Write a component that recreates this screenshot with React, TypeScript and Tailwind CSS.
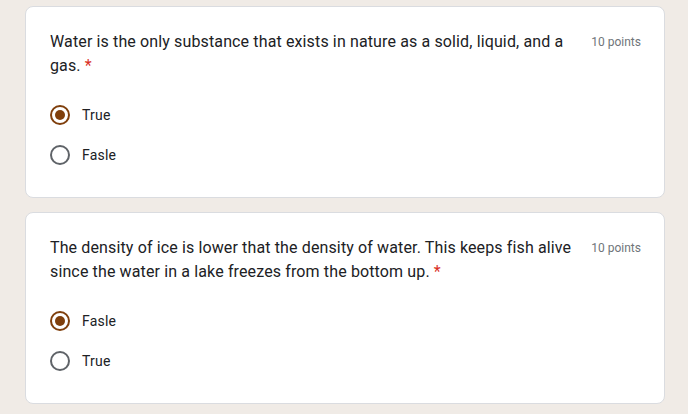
import React from "react";

type Q = { text: string; options: string[]; selected: number };

const questions: Q[] = [
  {
    text: "Water is the only substance that exists in nature as a solid, liquid, and a gas.",
    options: ["True", "Fasle"],
    selected: 0,
  },
  {
    text: "The density of ice is lower that the density of water. This keeps fish alive since the water in a lake freezes from the bottom up.",
    options: ["Fasle", "True"],
    selected: 0,
  },
];

function Radio({ checked }: { checked: boolean }) {
  return checked ? (
    <span className="flex h-5 w-5 items-center justify-center rounded-full border-2 border-[#7f3f0c]">
      <span className="h-2.5 w-2.5 rounded-full bg-[#7f3f0c]" />
    </span>
  ) : (
    <span className="h-5 w-5 rounded-full border-2 border-[#5f6368]" />
  );
}

export default function App() {
  return (
    <div className="min-h-[414px] bg-[#f0ebe6] pt-[6px] pl-[25px] font-['Roboto',sans-serif]">
      {questions.map((q, i) => (
        <div
          key={i}
          className="mb-[14px] h-[192px] w-[640px] rounded-lg border border-[#dadce0] bg-white pl-[24px] pr-[23px] pt-[23px]"
        >
          <div className="flex items-start justify-between">
            <div className="w-[528px] text-[16px] leading-[24px] tracking-[0.13px] text-[#202124]">
              {q.text}
              <span className="ml-[4px] text-[#d93025]">*</span>
            </div>
            <div className="pt-[4px] text-[12px] leading-[16px] text-[#70757a]">10 points</div>
          </div>
          <div className="mt-[27px] flex flex-col gap-[20px]">
            {q.options.map((o, j) => (
              <div key={j} className="flex items-center gap-[12px]">
                <Radio checked={j === q.selected} />
                <span className="text-[14px] leading-[20px] tracking-[0.2px] text-[#202124]">{o}</span>
              </div>
            ))}
          </div>
        </div>
      ))}
    </div>
  );
}
